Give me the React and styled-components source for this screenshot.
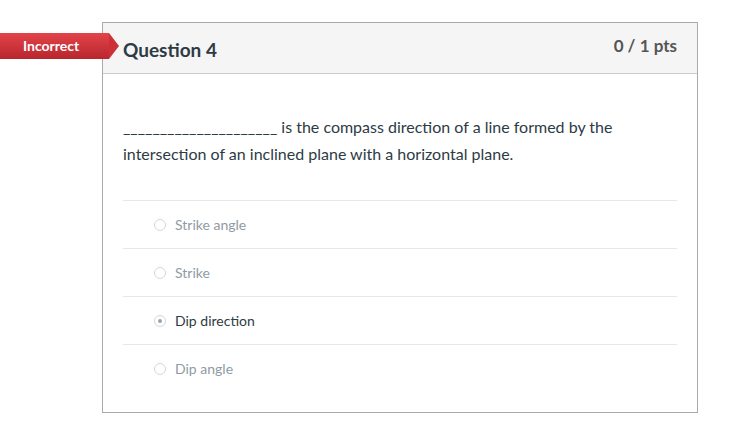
import React from "react";
import styled, { createGlobalStyle } from "styled-components";

const Global = createGlobalStyle`
  html, body { margin: 0; padding: 0; background: #fff; }
  body { font-family: Lato, "Open Sans", sans-serif; color: #2d3b45; }
`;

const Page = styled.div`
  padding: 22px 41px 0 102px;
  position: relative;
`;

const Card = styled.div`
  border: 1px solid #aaaaaa;
  width: 594px;
  background: #fff;
  position: relative;
`;

const Header = styled.div`
  height: 50px;
  background: #f5f5f5;
  border-bottom: 1px solid #c7cdd1;
  display: flex;
  justify-content: space-between;
  padding: 0 20px;
`;

const Title = styled.div`
  font-size: 19px;
  font-weight: 700;
  color: #2d3b45;
  line-height: 20px;
  padding-top: 17px;
`;

const Points = styled.div`
  font-size: 17px;
  font-weight: 700;
  color: #555;
  line-height: 20px;
  padding-top: 13px;
`;

const Flag = styled.div`
  position: absolute;
  left: -103px;
  top: 10px;
  width: 109px;
  height: 26px;
  background: linear-gradient(#e2444a, #b8262d);
  color: #fff;
  font-size: 14px;
  font-weight: 700;
  line-height: 26px;
  padding-left: 23px;
  box-sizing: border-box;
  &::after {
    content: "";
    position: absolute;
    right: -10px;
    top: 0;
    border-top: 13px solid transparent;
    border-bottom: 13px solid transparent;
    border-left: 10px solid #cc3138;
  }
`;

const Body = styled.div`
  padding: 39px 20px 20px 20px;
`;

const QuestionText = styled.p`
  margin: 0 0 33px;
  font-size: 16px;
  line-height: 27px;
  color: #2d3b45;
`;

const Answer = styled.div`
  height: 47px;
  border-top: 1px solid #e5e8ea;
  display: flex;
  align-items: center;
  padding-left: 31px;
  gap: 9px;
  font-size: 14px;
  color: ${(p) => (p.$selected ? "#2d3b45" : "#8f9ba3")};
`;

const Radio = styled.span`
  width: 12px;
  height: 12px;
  border: 1px solid #d3d7da;
  border-radius: 50%;
  box-sizing: border-box;
  display: flex;
  align-items: center;
  justify-content: center;
  &::after {
    content: "";
    width: 4px;
    height: 4px;
    border-radius: 50%;
    background: ${(p) => (p.$selected ? "#9aa3a9" : "transparent")};
  }
`;

const answers = [
  { label: "Strike angle" },
  { label: "Strike" },
  { label: "Dip direction", selected: true },
  { label: "Dip angle" },
];

export default function App() {
  return (
    <>
      <Global />
      <Page>
        <Card>
          <Flag>Incorrect</Flag>
          <Header>
            <Title>Question 4</Title>
            <Points>0 / 1 pts</Points>
          </Header>
          <Body>
            <QuestionText>
              _____________________ is the compass direction of a line formed by the
              intersection of an inclined plane with a horizontal plane.
            </QuestionText>
            {answers.map((a) => (
              <Answer key={a.label} $selected={a.selected}>
                <Radio $selected={a.selected} />
                {a.label}
              </Answer>
            ))}
          </Body>
        </Card>
      </Page>
    </>
  );
}
